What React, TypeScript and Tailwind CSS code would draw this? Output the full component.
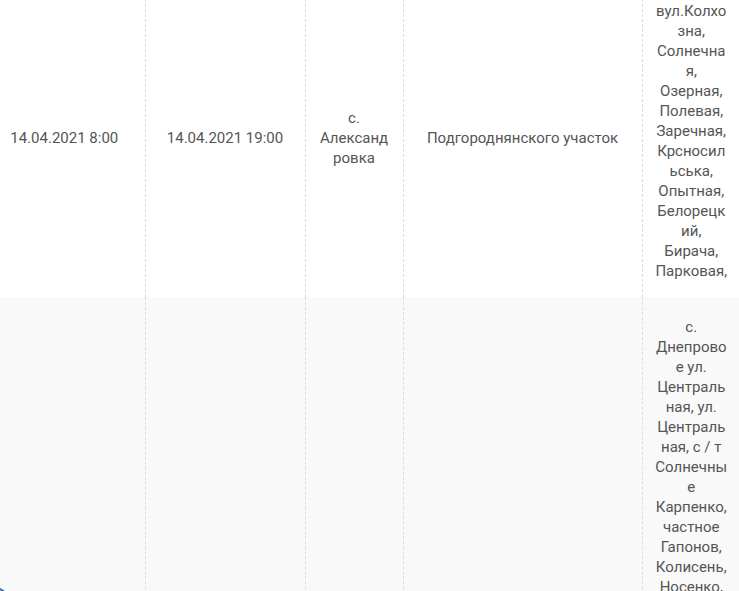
const font = { fontFamily: "Roboto, 'Liberation Sans', sans-serif" };

type Row = {
  start: string;
  end: string;
  place: string;
  area: string;
  streets: string;
};

const rows: Row[] = [
  {
    start: "14.04.2021 8:00",
    end: "14.04.2021 19:00",
    place: "с. Александровка",
    area: "Подгороднянского участок",
    streets:
      "вул.Колхозна, Солнечная, Озерная, Полевая, Заречная, Крсносильська, Опытная, Белорецкий, Бирача, Парковая,",
  },
  {
    start: "14.04.2021 8:00",
    end: "14.04.2021 17:00",
    place: "с. Днепровое",
    area: "Подгороднянского участок",
    streets:
      "с. Днепровое ул. Центральная, ул. Центральная, с / т Солнечные Карпенко, частное Гапонов, Колисень, Носенко, Шевченко, Набережная, Садовая, Лесная, Мира, Молодежная, Школьная, Луговая, Вишневая, Степная, Садовая, Зеленая, Весенняя, Дачная, Речная, Кленовая, Победы, Гагарина, Космическая, Нагорная, Песчаная, Тихая,",
  },
];

const cell = "border-r border-dashed border-[#ddd] px-[12px] py-[16px] align-middle break-words";

export default function App() {
  return (
    <div className="relative h-[591px] w-[739px] overflow-hidden bg-white" style={font}>
      <table className="-mt-[21px] -ml-[16px] w-[756px] table-fixed border-collapse text-center text-[15px] leading-[20px] text-[#555]">
        <colgroup>
          <col className="w-[161px]" />
          <col className="w-[160px]" />
          <col className="w-[98px]" />
          <col className="w-[239px]" />
          <col className="w-[98px]" />
        </colgroup>
        <tbody>
          {rows.map((r, i) => (
            <tr key={i} className={i % 2 === 1 ? "bg-[#f9f9f9]" : "bg-white"}>
              <td className={cell}>{r.start}</td>
              <td className={cell}>{r.end}</td>
              <td className={cell}>{r.place}</td>
              <td className={cell}>{r.area}</td>
              <td
                className={`px-[12px] pb-[16px] align-middle break-words ${
                  i === 0 ? "pt-[22px]" : "pt-[20px]"
                }`}
              >
                {r.streets}
              </td>
            </tr>
          ))}
        </tbody>
      </table>

      {/* floating button peeking in at the bottom left */}
      <div className="absolute left-[-34px] top-[586px] h-[48px] w-[48px] rounded-full border-2 border-[#3d6b9e] bg-white" />
    </div>
  );
}
